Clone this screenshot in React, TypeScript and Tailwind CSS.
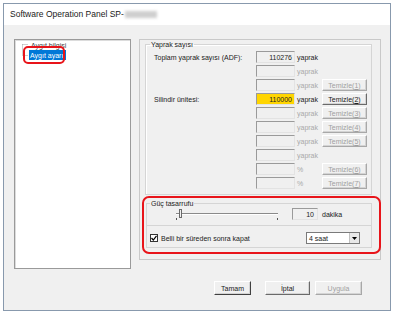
import type { ReactNode } from "react";

const font = "font-['Liberation_Sans',Arial,sans-serif]";

function Field({ value, yellow }: { value?: string; yellow?: boolean }) {
  return (
    <div
      className={`w-[39px] h-[12px] border border-t-[#9a9a9a] border-l-[#9a9a9a] border-r-[#e3e3e3] border-b-[#e3e3e3] flex items-center justify-end pr-[2px] ${
        yellow ? "bg-[#ffd500]" : "bg-[#f0f0f0]"
      }`}
    >
      {value}
    </div>
  );
}

function Btn({ children, active, size, strong }: { children: ReactNode; active?: boolean; size: string; strong?: boolean }) {
  return (
    <div
      className={`${size} flex items-center justify-center bg-[#f0f0f0] border border-t-white border-l-white ${
        strong ? "border-r-[#404040] border-b-[#404040]" : active ? "border-r-[#6a6a6a] border-b-[#6a6a6a]" : "border-r-[#a8a8a8] border-b-[#a8a8a8]"
      } shadow-[inset_-1px_-1px_0_#d4d4d4] ${active ? "text-[#222]" : "text-[#a0a0a0]"}`}
    >
      {children}
    </div>
  );
}

function Clear({ n, active }: { n: number; active?: boolean }) {
  return (
    <Btn size="w-[45px] h-[12px]" active={active}>
      Temizle(<u>{n}</u>)
    </Btn>
  );
}

type Row = { label?: string; value?: string; yellow?: boolean; unit: string; on?: boolean; btn?: number; btnOn?: boolean };

const rows: Row[] = [
  { label: "Toplam yaprak sayısı (ADF):", value: "110276", unit: "yaprak", on: true },
  { unit: "yaprak" },
  { unit: "yaprak", btn: 1 },
  { label: "Silindir ünitesi:", value: "110000", yellow: true, unit: "yaprak", on: true, btn: 2, btnOn: true },
  { unit: "yaprak", btn: 3 },
  { unit: "yaprak", btn: 4 },
  { unit: "yaprak", btn: 5 },
  { unit: "yaprak" },
  { unit: "%", btn: 6 },
  { unit: "%", btn: 7 },
];

export default function App() {
  return (
    <div className={`relative w-[395px] h-[315px] bg-white overflow-hidden pl-[3px] pt-[3px] text-[7px] leading-none text-[#222] ${font}`}>
      {/* window */}
      <div className="w-[388px] h-[308px] border border-[#8899ad] flex flex-col">
        <div className="h-[21px] bg-white flex items-center pl-[6px] text-[8.5px] text-[#1a1a1a]">
          <span>Software Operation Panel SP-</span>
          <span className="ml-[1px] w-[32px] h-[7px] bg-[#cfcfcf] blur-[1.5px]" />
        </div>

        <div className="flex-1 bg-[#f0f0f0] flex flex-col pt-[14px] pl-[10px]">
          <div className="flex items-start">
            {/* tree view */}
            <div className="w-[117px] h-[230px] bg-white border border-[#9a9a9a] shadow-[inset_1px_1px_0_#dcdcdc] pl-[4px]">
              <div className="flex">
                <svg width="10" height="21" className="shrink-0">
                  <path d="M3.5 4.5 H9 M3.5 4.5 V15.5 H9" stroke="#a0a0a0" strokeWidth="1" strokeDasharray="1 1" fill="none" />
                </svg>
                <div className="flex flex-col">
                  <div className="h-[10px] flex items-center pl-[2px] text-[#444]">Aygıt bilgisi</div>
                  <div className="h-[10px] flex items-center px-[1px] bg-[#0078d7] text-white">Aygıt ayarı</div>
                </div>
              </div>
            </div>

            {/* right panel */}
            <div className="ml-[8px] w-[242px] h-[221px] border border-[#c9c9c9] pl-[5px] pr-[8px] pt-[1px] flex flex-col">
              <fieldset className="border border-[#d5d5d5] shadow-[inset_1px_1px_0_#ffffff] pl-[8px] pb-[4px]">
                <legend className="ml-[-4px] px-[1px]">Yaprak sayısı</legend>
                <div className="flex flex-col pt-[2px]">
                  {rows.map((r, i) => (
                    <div key={i} className="flex items-center h-[14px]">
                      <div className="w-[102px]">{r.label}</div>
                      <Field value={r.value} yellow={r.yellow} />
                      <div className={`w-[27px] pl-[2px] ${r.on ? "text-[#222]" : "text-[#a8a8a8]"}`}>{r.unit}</div>
                      {r.btn && <Clear n={r.btn} active={r.btnOn} />}
                    </div>
                  ))}
                </div>
              </fieldset>

              <fieldset className="mt-[5px] ml-[1px] border border-[#d5d5d5] flex flex-col">
                <legend className="ml-[3px] px-[1px]">Güç tasarrufu</legend>
                <div className="h-[14px] flex items-center pl-[28px]">
                  <svg width="104" height="14" className="shrink-0">
                    <line x1="1" y1="6.5" x2="103" y2="6.5" stroke="#8a8a8a" />
                    <line x1="1" y1="7.5" x2="103" y2="7.5" stroke="#ffffff" />
                    <rect x="4.5" y="2.5" width="2" height="8" fill="#f0f0f0" stroke="#6a6a6a" />
                    <line x1="1.5" y1="11" x2="1.5" y2="13" stroke="#555" />
                    <line x1="102.5" y1="11" x2="102.5" y2="13" stroke="#555" />
                  </svg>
                  <div className="ml-[13px] w-[26px] h-[12px] border border-t-[#9a9a9a] border-l-[#9a9a9a] border-r-[#e3e3e3] border-b-[#e3e3e3] flex items-center justify-end pr-[3px]">
                    10
                  </div>
                  <span className="ml-[4px]">dakika</span>
                </div>
                <div className="mt-[4px] border-t border-[#d5d5d5]" />
                <div className="mt-[5px] mb-[2px] h-[14px] flex items-center pl-[3px] pr-[11px]">
                  <div className="w-[8px] h-[8px] border border-[#333] bg-white flex items-center justify-center">
                    <svg width="6" height="6">
                      <path d="M0.5 3 L2.3 5 L5.5 0.8" stroke="#000" strokeWidth="1.2" fill="none" />
                    </svg>
                  </div>
                  <span className="ml-[3px]">Belli bir süreden sonra kapat</span>
                  <div className="ml-auto w-[54px] h-[12px] bg-white border border-[#7a7a7a] flex items-center pl-[2px]">
                    <span className="flex-1">4 saat</span>
                    <div className="w-[10px] h-[10px] bg-[#e8e8e8] border-l border-[#c0c0c0] flex items-center justify-center">
                      <svg width="5" height="3">
                        <path d="M0 0 H5 L2.5 3 Z" fill="#000" />
                      </svg>
                    </div>
                  </div>
                </div>
              </fieldset>
            </div>
          </div>

          {/* dialog buttons */}
          <div className="mt-[12px] flex items-center">
            <div className="ml-[200px]">
              <Btn size="w-[37px] h-[14px]" active strong>Tamam</Btn>
            </div>
            <div className="ml-[14px]">
              <Btn size="w-[45px] h-[14px]" active>İptal</Btn>
            </div>
            <div className="ml-[5px]">
              <Btn size="w-[47px] h-[14px]">Uygula</Btn>
            </div>
          </div>
        </div>
      </div>

      {/* red annotation marks */}
      <div className="absolute left-[23px] top-[46px] w-[42px] h-[18px] border-2 border-[#e8141a] rounded-[5px]" />
      <div className="absolute left-[142px] top-[196px] w-[239px] h-[58px] border-2 border-[#e8141a] rounded-[7px]" />
    </div>
  );
}
